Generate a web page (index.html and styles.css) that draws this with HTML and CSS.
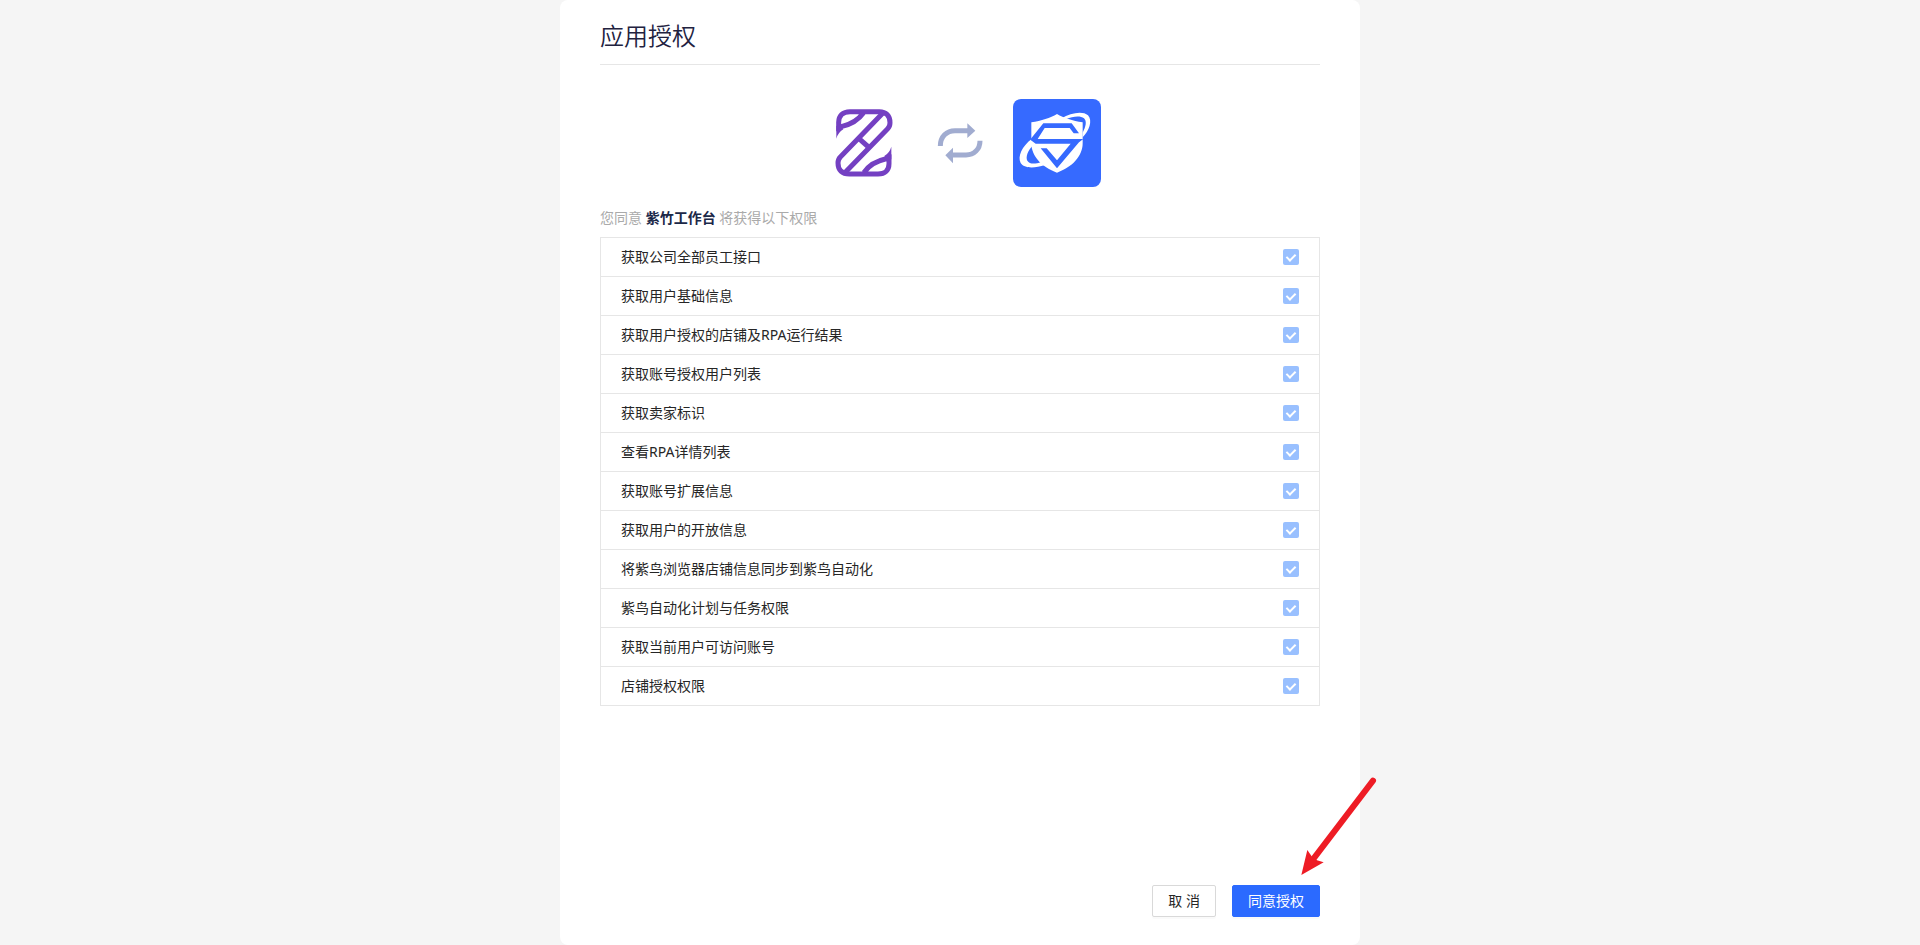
FILE: index.html
```
<!DOCTYPE html>
<html lang="zh-CN">
<head>
<meta charset="UTF-8">
<title>应用授权</title>
<meta name="viewport" content="width=device-width, initial-scale=1">
<link rel="stylesheet" href="styles.css">
</head>
<body>
<main class="auth-card">
  <h1 class="auth-title">应用授权</h1>

  <div class="auth-logos">
    <svg class="logo" viewBox="-3 27 264 264" fill="none" stroke="#7440c2" stroke-width="15" aria-hidden="true">
      <path d="M188 70 L61 201 Q54 208 54 219 C54 240 66 252 88 252 L174 252 C196 252 207 240 207 221 L207 204 C198 208 160 208 132 247"/>
      <path d="M76 247 L203 116 Q210 109 210 98 C210 77 198 65 178 65 L90 65 C68 65 56 77 56 97 L56 112 C66 107 102 108 130 69"/>
      <path d="M117 146 L149 174"/>
      <path d="M49 108 L49 146 Q54 128 70 118 L62 104 Z" fill="#7440c2" stroke="none"/>
      <path d="M214 208 L214 170 Q209 188 193 198 L201 212 Z" fill="#7440c2" stroke="none"/>
    </svg>
    <svg class="swap" viewBox="45 24 150 150" aria-hidden="true">
      <path d="M61 108 C61 80 80 62 105 62 L145 62 M180 92 C180 118 162 135 138 135 L96 135" fill="none" stroke="#a1acd0" stroke-width="15"/>
      <path d="M142 40 L166 62 L142 84 Z M99 113 L76 136 L99 160 Z" fill="#a1acd0"/>
    </svg>
    <svg class="logo" viewBox="24 27 264 264" aria-hidden="true">
      <rect x="24" y="27" width="264" height="264" rx="24" fill="#366aff"/>
      <path d="M170 85 C196 69 233 62 249 76 C264 92 252 123 233 142 L233 128 C243 110 246 93 237 85 C225 76 202 80 184 87 Z" fill="#fff"/>
      <path d="M80 147 C51 169 37 199 47 219 C57 236 89 235 120 225 L109 216 C89 223 74 223 67 212 C61 200 69 181 83 167 Z" fill="#fff"/>
      <path d="M156 72 C176 84 203 92 233 97 L233 160 C233 199 201 232 156 248 C111 232 79 199 79 160 L79 97 C109 92 136 84 156 72 Z" fill="#fff"/>
      <path d="M115 100 L200 100 L222 130 L206 130 L194 114 L119 114 L98 147 L235 147 L222 157 L156 235 L107 175 L125 175 L156 211 L197 161 L92 161 L77 150 L77 147 Z" fill="#366aff"/>
    </svg>
  </div>

  <p class="auth-tip">您同意 <strong>紫竹工作台</strong> 将获得以下权限</p>

  <ul class="scope-list">
    <li><label for="scope1">获取公司全部员工接口</label><input type="checkbox" id="scope1" checked disabled></li>
    <li><label for="scope2">获取用户基础信息</label><input type="checkbox" id="scope2" checked disabled></li>
    <li><label for="scope3">获取用户授权的店铺及RPA运行结果</label><input type="checkbox" id="scope3" checked disabled></li>
    <li><label for="scope4">获取账号授权用户列表</label><input type="checkbox" id="scope4" checked disabled></li>
    <li><label for="scope5">获取卖家标识</label><input type="checkbox" id="scope5" checked disabled></li>
    <li><label for="scope6">查看RPA详情列表</label><input type="checkbox" id="scope6" checked disabled></li>
    <li><label for="scope7">获取账号扩展信息</label><input type="checkbox" id="scope7" checked disabled></li>
    <li><label for="scope8">获取用户的开放信息</label><input type="checkbox" id="scope8" checked disabled></li>
    <li><label for="scope9">将紫鸟浏览器店铺信息同步到紫鸟自动化</label><input type="checkbox" id="scope9" checked disabled></li>
    <li><label for="scope10">紫鸟自动化计划与任务权限</label><input type="checkbox" id="scope10" checked disabled></li>
    <li><label for="scope11">获取当前用户可访问账号</label><input type="checkbox" id="scope11" checked disabled></li>
    <li><label for="scope12">店铺授权权限</label><input type="checkbox" id="scope12" checked disabled></li>
  </ul>

  <div class="auth-footer">
    <button type="button" class="btn">取 消</button>
    <button type="button" class="btn btn-primary">同意授权</button>
    <svg class="pointer" viewBox="480 51 231 297" aria-hidden="true">
      <path d="M699 62 L519 298" stroke="#ee1c25" stroke-width="18" stroke-linecap="round"/>
      <path d="M484 345 L502 270 L516 290 L531 301 L551 307 Z" fill="#ee1c25"/>
    </svg>
  </div>
</main>
</body>
</html>
```
FILE: styles.css
```
:root {
  --bg: #f5f5f5;
  --border: #e6e6e6;
  --primary: #2b6aff;
  --text: #262626;
}

*, *::after { box-sizing: border-box; }

body {
  margin: 0;
  background: var(--bg);
  color: var(--text);
  font-family: "Noto Sans", "Noto Sans CJK SC", sans-serif;
  font-size: 14px;
  line-height: 22px;
}

.auth-card {
  display: flex;
  flex-direction: column;
  max-width: 800px;
  min-height: 100vh;
  margin: 0 auto;
  padding: 8px 40px 28px;
  background: #fff;
  border-radius: 8px;
}

.auth-title {
  margin: 0;
  padding: 8px 0;
  border-bottom: 1px solid var(--border);
  color: #22223f;
  font-size: 24px;
  font-weight: 350;
  line-height: 40px;
}

.auth-logos {
  display: flex;
  justify-content: center;
  align-items: center;
  gap: 28px;
  padding: 34px 0 20px;
}
.logo { width: 88px; height: 88px; }
.swap { width: 50px; height: 50px; }

.auth-tip { margin: 0 0 8px; color: #aaa; }
.auth-tip strong { color: #1b2848; font-weight: 700; }

/* permissions */
.scope-list {
  margin: 0;
  padding: 0;
  border: 1px solid var(--border);
  list-style: none;
}
.scope-list li {
  display: flex;
  justify-content: space-between;
  align-items: center;
  padding: 8px 20px;
}
.scope-list li + li { border-top: 1px solid var(--border); }

.scope-list input {
  appearance: none;
  display: flex;
  justify-content: center;
  width: 16px;
  height: 16px;
  margin: 0;
  border-radius: 2px;
  background: #99c0ff;
}
.scope-list input::after {
  content: "";
  width: 6px;
  height: 9px;
  margin-top: 3px;
  border: solid #fff;
  border-width: 0 2px 2px 0;
  transform: rotate(45deg);
}

/* actions */
.auth-footer {
  position: relative;
  display: flex;
  justify-content: flex-end;
  gap: 16px;
  margin-top: auto;
}
.btn {
  height: 32px;
  padding: 0 15px;
  border: 1px solid #d9d9d9;
  border-radius: 2px;
  background: #fff;
  box-shadow: 0 2px 0 rgba(0, 0, 0, .02);
  color: var(--text);
  font: inherit;
  cursor: pointer;
}
.btn-primary {
  border-color: var(--primary);
  background: var(--primary);
  color: #fff;
}

.pointer {
  position: absolute;
  right: -57px;
  bottom: 41px;
  width: 77px;
  height: 99px;
  pointer-events: none;
}
```
